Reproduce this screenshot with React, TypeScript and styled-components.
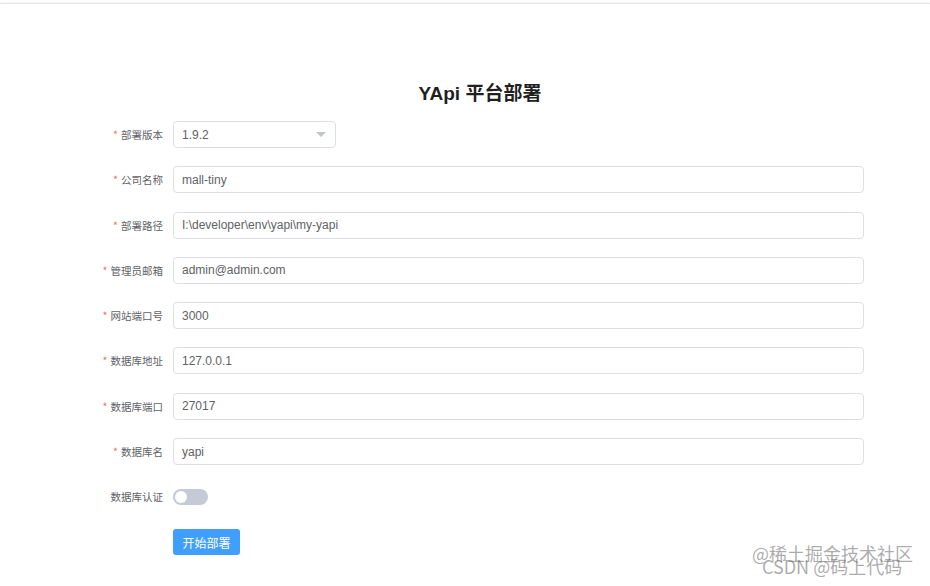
import React from 'react';
import styled, { createGlobalStyle } from 'styled-components';

const GlobalStyle = createGlobalStyle`
  html, body {
    margin: 0;
    padding: 0;
    background: #fff;
    font-family: "Liberation Sans", Arial, "Noto Sans CJK SC", sans-serif;
  }
`;

const Page = styled.div`
  width: 930px;
  height: 586px;
  padding-top: 3px;
  box-sizing: border-box;
  position: relative;
  overflow: hidden;
`;

const Card = styled.div`
  height: 100%;
  border-top: 1px solid #e6e6e6;
  box-shadow: 0 1px 4px rgba(0, 0, 0, 0.12);
  padding: 78px 66px 0 0;
  box-sizing: border-box;
`;

const Title = styled.h2`
  margin: 0 0 15px 0;
  padding-left: 96px;
  text-align: center;
  font-size: 19px;
  line-height: 24px;
  font-weight: 700;
  color: #1f1f1f;
`;

const Form = styled.div`
  display: flex;
  flex-direction: column;
  gap: 18.3px;
`;

const Row = styled.div`
  display: flex;
  align-items: center;
  height: 27px;
`;

const Label = styled.label<{ $required?: boolean }>`
  width: 163px;
  margin-right: 10px;
  text-align: right;
  font-size: 10.5px;
  color: #606266;
  font-family: "Noto Sans CJK SC", sans-serif;

  &::before {
    content: ${(p) => (p.$required ? "'*'" : "''")};
    color: #f56c6c;
    margin-right: 3px;
  }
`;

const Input = styled.div<{ $width?: number }>`
  width: ${(p) => (p.$width ? `${p.$width}px` : 'auto')};
  flex: ${(p) => (p.$width ? 'none' : '1')};
  height: 27px;
  box-sizing: border-box;
  border: 1px solid #dcdfe6;
  border-radius: 4px;
  padding: 0 9px 0 8px;
  display: flex;
  align-items: center;
  justify-content: space-between;
  font-size: 12px;
  color: #606266;
`;

const Caret = styled.span`
  width: 0;
  height: 0;
  border-left: 5px solid transparent;
  border-right: 5px solid transparent;
  border-top: 5px solid #c0c4cc;
`;

const Switch = styled.div`
  width: 35px;
  height: 16px;
  border-radius: 8px;
  background: #c5cad6;
  position: relative;

  &::after {
    content: '';
    position: absolute;
    left: 2px;
    top: 2px;
    width: 12px;
    height: 12px;
    border-radius: 50%;
    background: #fff;
  }
`;

const Button = styled.button`
  margin-left: 173px;
  width: 67px;
  height: 26px;
  border: none;
  border-radius: 3px;
  background: #409eff;
  color: #fff;
  font-size: 12px;
  font-family: "Noto Sans CJK SC", sans-serif;
  padding: 0;
`;

const Watermark = styled.div`
  position: absolute;
  left: 752px;
  top: 543px;
  width: 170px;
  height: 36px;
  font-family: "Noto Sans CJK SC", sans-serif;
  font-size: 18px;
  color: rgba(90, 90, 90, 0.5);
`;

const MarkLine = styled.span<{ $top: number; $left: number }>`
  position: absolute;
  top: ${(p) => p.$top}px;
  left: ${(p) => p.$left}px;
  white-space: nowrap;
  line-height: 20px;
`;

const fields: { label: string; value: string }[] = [
  { label: '公司名称', value: 'mall-tiny' },
  { label: '部署路径', value: 'I:\\developer\\env\\yapi\\my-yapi' },
  { label: '管理员邮箱', value: 'admin@admin.com' },
  { label: '网站端口号', value: '3000' },
  { label: '数据库地址', value: '127.0.0.1' },
  { label: '数据库端口', value: '27017' },
  { label: '数据库名', value: 'yapi' },
];

const App = () => (
  <Page>
    <GlobalStyle />
    <Card>
      <Title>YApi 平台部署</Title>
      <Form>
        <Row>
          <Label $required>部署版本</Label>
          <Input $width={163}>
            1.9.2
            <Caret />
          </Input>
        </Row>
        {fields.map((f) => (
          <Row key={f.label}>
            <Label $required>{f.label}</Label>
            <Input>{f.value}</Input>
          </Row>
        ))}
        <Row>
          <Label>数据库认证</Label>
          <Switch />
        </Row>
        <Row>
          <Button>开始部署</Button>
        </Row>
      </Form>
    </Card>
    <Watermark>
      <MarkLine $top={0} $left={0}>@稀土掘金技术社区</MarkLine>
      <MarkLine $top={13} $left={10}>CSDN @码上代码</MarkLine>
    </Watermark>
  </Page>
);

export default App;
